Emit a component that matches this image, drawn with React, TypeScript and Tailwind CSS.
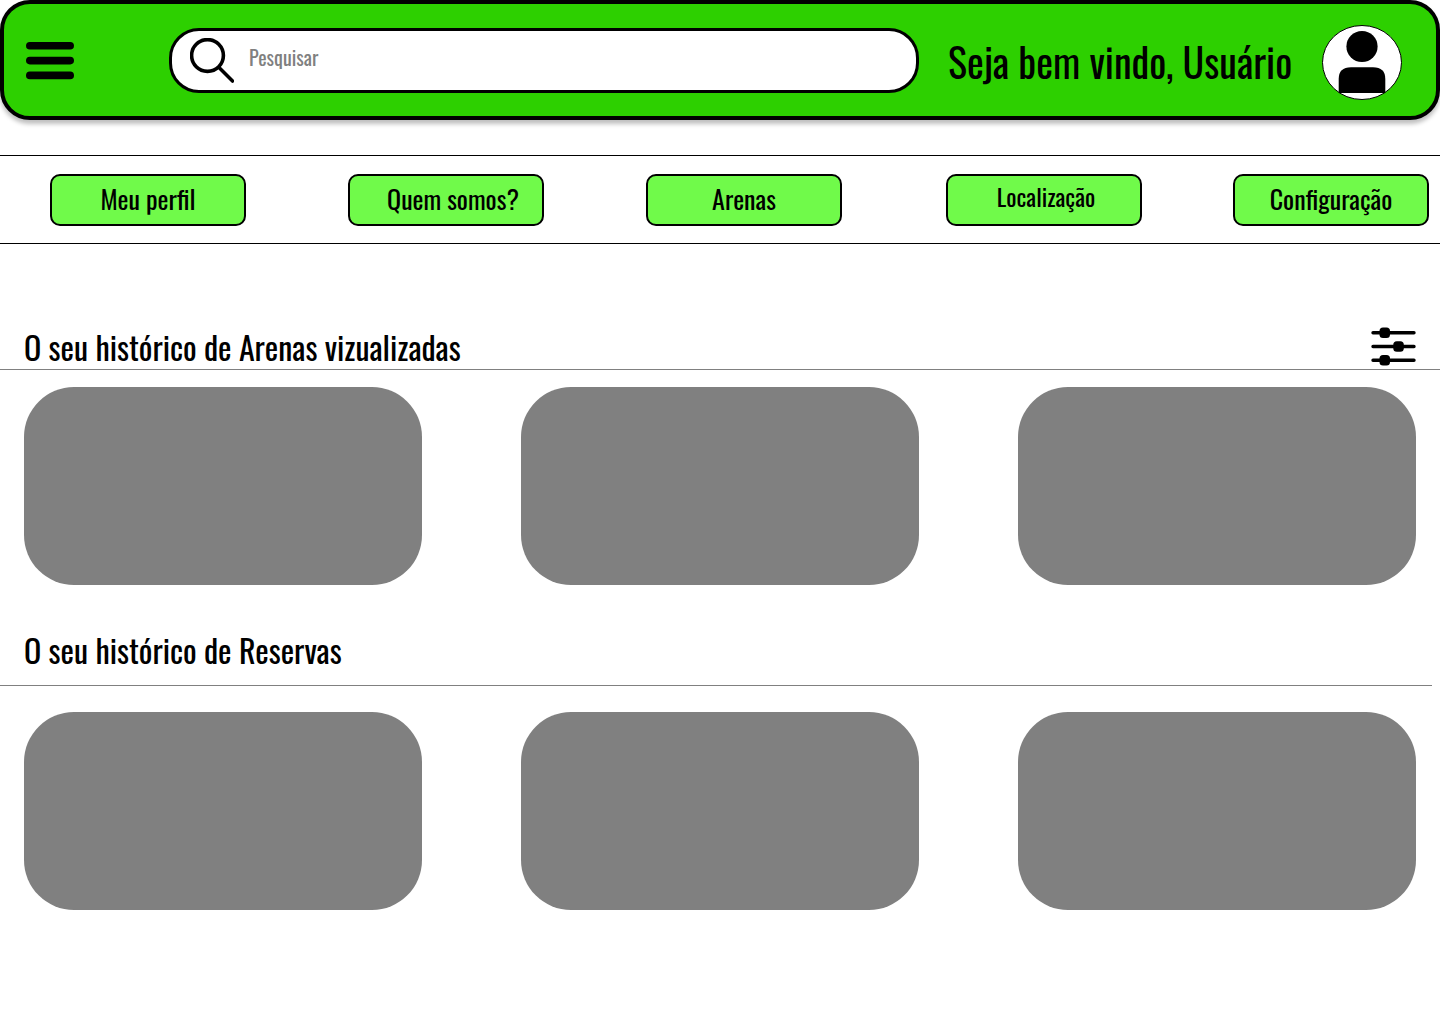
const links = [
  { label: 'Meu perfil', extra: 'text-[26px] pb-1' },
  { label: 'Quem somos?', extra: 'text-[26px] pb-1 pl-3.5' },
  { label: 'Arenas', extra: 'text-[26px] pb-1' },
  { label: 'Localização', extra: 'text-2xl pb-2 pl-1' },
  { label: 'Configuração', extra: 'text-[26px] pb-1' },
];

function MenuIcon() {
  return (
    <svg viewBox="0 0 48 38" className="h-[38px] w-12" aria-hidden="true">
      <rect width="48" height="7.6" rx="3.8" />
      <rect y="14.8" width="48" height="7.6" rx="3.8" />
      <rect y="29.6" width="48" height="7.6" rx="3.8" />
    </svg>
  );
}

function SearchIcon() {
  return (
    <svg viewBox="0 0 44 45" className="h-[45px] w-11 shrink-0" fill="none" stroke="#000" aria-hidden="true">
      <circle cx="17.5" cy="17.5" r="15.9" strokeWidth="3.6" />
      <path d="M29 29.5 42.5 43" strokeWidth="3.6" strokeLinecap="round" />
    </svg>
  );
}

function Avatar() {
  return (
    <svg viewBox="0 0 80 76" className="h-[76px] w-20" aria-hidden="true">
      <ellipse cx="40" cy="37.5" rx="39.5" ry="37" fill="#fff" stroke="#000" />
      <circle cx="40" cy="21.5" r="15.6" />
      <path d="M16.7 68V54Q16.7 42.3 29 42.3H51Q63.3 42.3 63.3 54V68Z" />
    </svg>
  );
}

function FilterIcon() {
  return (
    <svg viewBox="0 0 45 39" className="h-[39px] w-[45px]" aria-hidden="true">
      <g stroke="#000" strokeWidth="3.4" strokeLinecap="round">
        <path d="M2 5.8H43M2 19.5H43M2 33.2H43" />
      </g>
      <rect x="8.5" y="0.5" width="10.5" height="10.5" rx="3.5" />
      <rect x="22.3" y="14.2" width="10.5" height="10.5" rx="3.5" />
      <rect x="8.5" y="27.9" width="10.5" height="10.5" rx="3.5" />
    </svg>
  );
}

function Cards({ name }: { name: string }) {
  return (
    <ul className="grid grid-cols-3 gap-[99px] px-6">
      {[1, 2, 3].map((n) => (
        <li key={n}>
          <a href="#" aria-label={`${name} ${n}`} className="block h-[198px] rounded-[50px] bg-[#808080]" />
        </li>
      ))}
    </ul>
  );
}

export default function App() {
  return (
    <div className="min-h-screen bg-white font-['Oswald','Liberation_Sans_Narrow','Roboto_Condensed','Open_Sans_Condensed','Liberation_Sans',sans-serif] text-black">
      <header className="flex h-[120px] items-center rounded-[30px] border-4 border-black bg-[#2dd000] pr-[34px] pl-[22px] shadow-[0_4px_4px_rgba(0,0,0,0.25)]">
        <button type="button" aria-label="Menu" className="pt-0.5">
          <MenuIcon />
        </button>
        <label className="ml-[95px] flex h-[65px] min-w-0 flex-1 items-center rounded-[30px] border-[3px] border-black bg-white pr-6 pl-[18px]">
          <SearchIcon />
          <input
            type="search"
            aria-label="Pesquisar"
            placeholder="Pesquisar"
            className="ml-[15px] h-10 min-w-0 flex-1 pb-1.5 text-xl outline-none placeholder:text-[#808080]"
          />
        </label>
        <p className="ml-[29px] w-[345px] shrink-0 pt-0.5 text-[40px] leading-[60px] whitespace-nowrap">Seja bem vindo, Usuário</p>
        <button type="button" aria-label="Usuário" className="ml-[29px] shrink-0 pt-1.5">
          <Avatar />
        </button>
      </header>

      <nav className="mt-[35px] grid grid-cols-[298fr_298fr_300fr_287fr_196fr] border-y border-black pt-[18px] pr-[11px] pb-[17px] pl-[50px]">
        {links.map(({ label, extra }) => (
          <a
            key={label}
            href="#"
            className={`flex h-[52px] w-[196px] items-center justify-center rounded-[10px] border-2 border-black bg-[#70fa4a] whitespace-nowrap ${extra}`}
          >
            {label}
          </a>
        ))}
      </nav>

      <main>
        <section>
          <div className="mt-[82px] mb-[17px] flex items-center justify-between border-b border-[#808080] px-6 pb-px">
            <h2 className="text-[32px] leading-[42px]">O seu histórico de Arenas vizualizadas</h2>
            <button type="button" aria-label="Filtrar" className="pb-0.5">
              <FilterIcon />
            </button>
          </div>
          <Cards name="Arena" />
        </section>

        <section>
          <div className="mt-11 mr-2 mb-[26px] border-b border-[#808080] pb-3.5 pl-6">
            <h2 className="text-[32px] leading-[42px]">O seu histórico de Reservas</h2>
          </div>
          <Cards name="Reserva" />
        </section>
      </main>
    </div>
  );
}
